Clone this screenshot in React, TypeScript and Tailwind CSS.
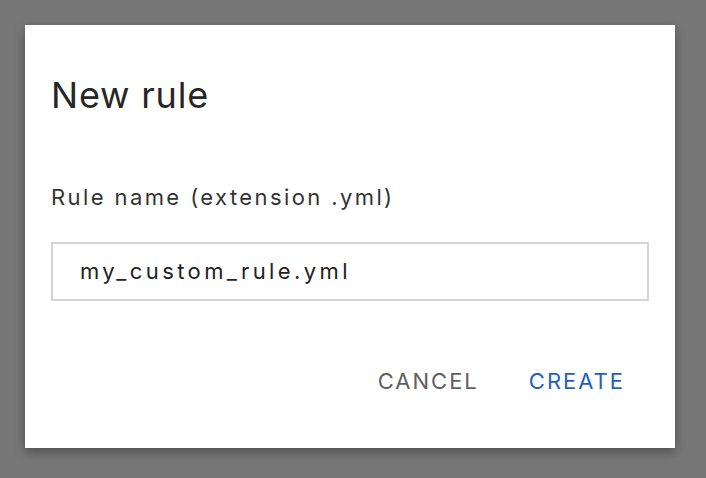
export default function App() {
  return (
    <div className="w-[706px] h-[478px] bg-[#777777] pt-[25px] pl-[25px]" style={{ fontFamily: "Inter, 'Noto Sans', sans-serif" }}>
      <div className="w-[650px] h-[423px] bg-white shadow-[0_4px_10px_rgba(0,0,0,0.35)] px-[26px] pt-[48px]">
        <h1 className="text-[36px] leading-[44px] text-[#262626] tracking-[0.8px]">New rule</h1>
        <div className="mt-[66px] text-[22px] leading-[28px] text-[#333333] tracking-[2.4px]">Rule name (extension .yml)</div>
        <div className="mt-[31px] h-[59px] border-2 border-[#d4d4d4] flex items-center pl-[27px] text-[22px] text-[#222222] tracking-[3.4px]">
          my_custom_rule.yml
        </div>
        <div className="mt-[66px] flex justify-end gap-[50px] pr-[24px] text-[22px] leading-[28px] tracking-[2px]">
          <span className="text-[#5f5f5f]">CANCEL</span>
          <span className="text-[#1f5fbf]">CREATE</span>
        </div>
      </div>
    </div>
  );
}
